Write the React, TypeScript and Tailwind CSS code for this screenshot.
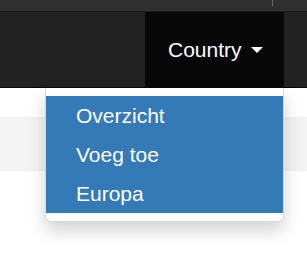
import React from "react";

export default function App() {
  return (
    <div
      className="relative h-[268px] w-[307px] overflow-hidden bg-white"
      style={{ fontFamily: '"Liberation Sans", Arial, sans-serif' }}
    >
      <div className="relative h-[12px] border-b border-[#1b1b1b] bg-[#2f2f2f]">
        <div className="absolute left-[272px] top-0 h-[6px] w-px bg-[#6a6a6a]" />
      </div>
      <nav className="flex h-[76px] justify-end border-b border-[#080808] bg-[#222222] pr-[23px]">
        <div className="relative h-[75px] w-[139px] bg-[#080808]">
          <div className="flex h-full items-center pl-[23px] text-[21px] leading-[30px] text-white">
            Country
            <span className="ml-[9px] mt-[1px] h-0 w-0 border-x-[6px] border-t-[6px] border-x-transparent border-t-white" />
          </div>
          <div className="absolute right-0 top-[76px] z-10 w-[239px] rounded-b-[6px] border border-t-0 border-[rgba(0,0,0,0.15)] bg-white py-[8px] shadow-[0_9px_18px_rgba(0,0,0,0.175)]">
            <div className="flex h-[39px] items-center bg-[#337ab7] pl-[30px] text-[21px] leading-[30px] text-white">
              Overzicht
            </div>
            <div className="flex h-[39px] items-center bg-[#337ab7] pl-[30px] text-[21px] leading-[30px] text-white">
              Voeg toe
            </div>
            <div className="flex h-[39px] items-center bg-[#337ab7] pl-[30px] text-[21px] leading-[30px] text-white">
              Europa
            </div>
          </div>
        </div>
      </nav>
      <div className="mt-[29px] h-[54px] bg-[#f3f3f3]" />
    </div>
  );
}
